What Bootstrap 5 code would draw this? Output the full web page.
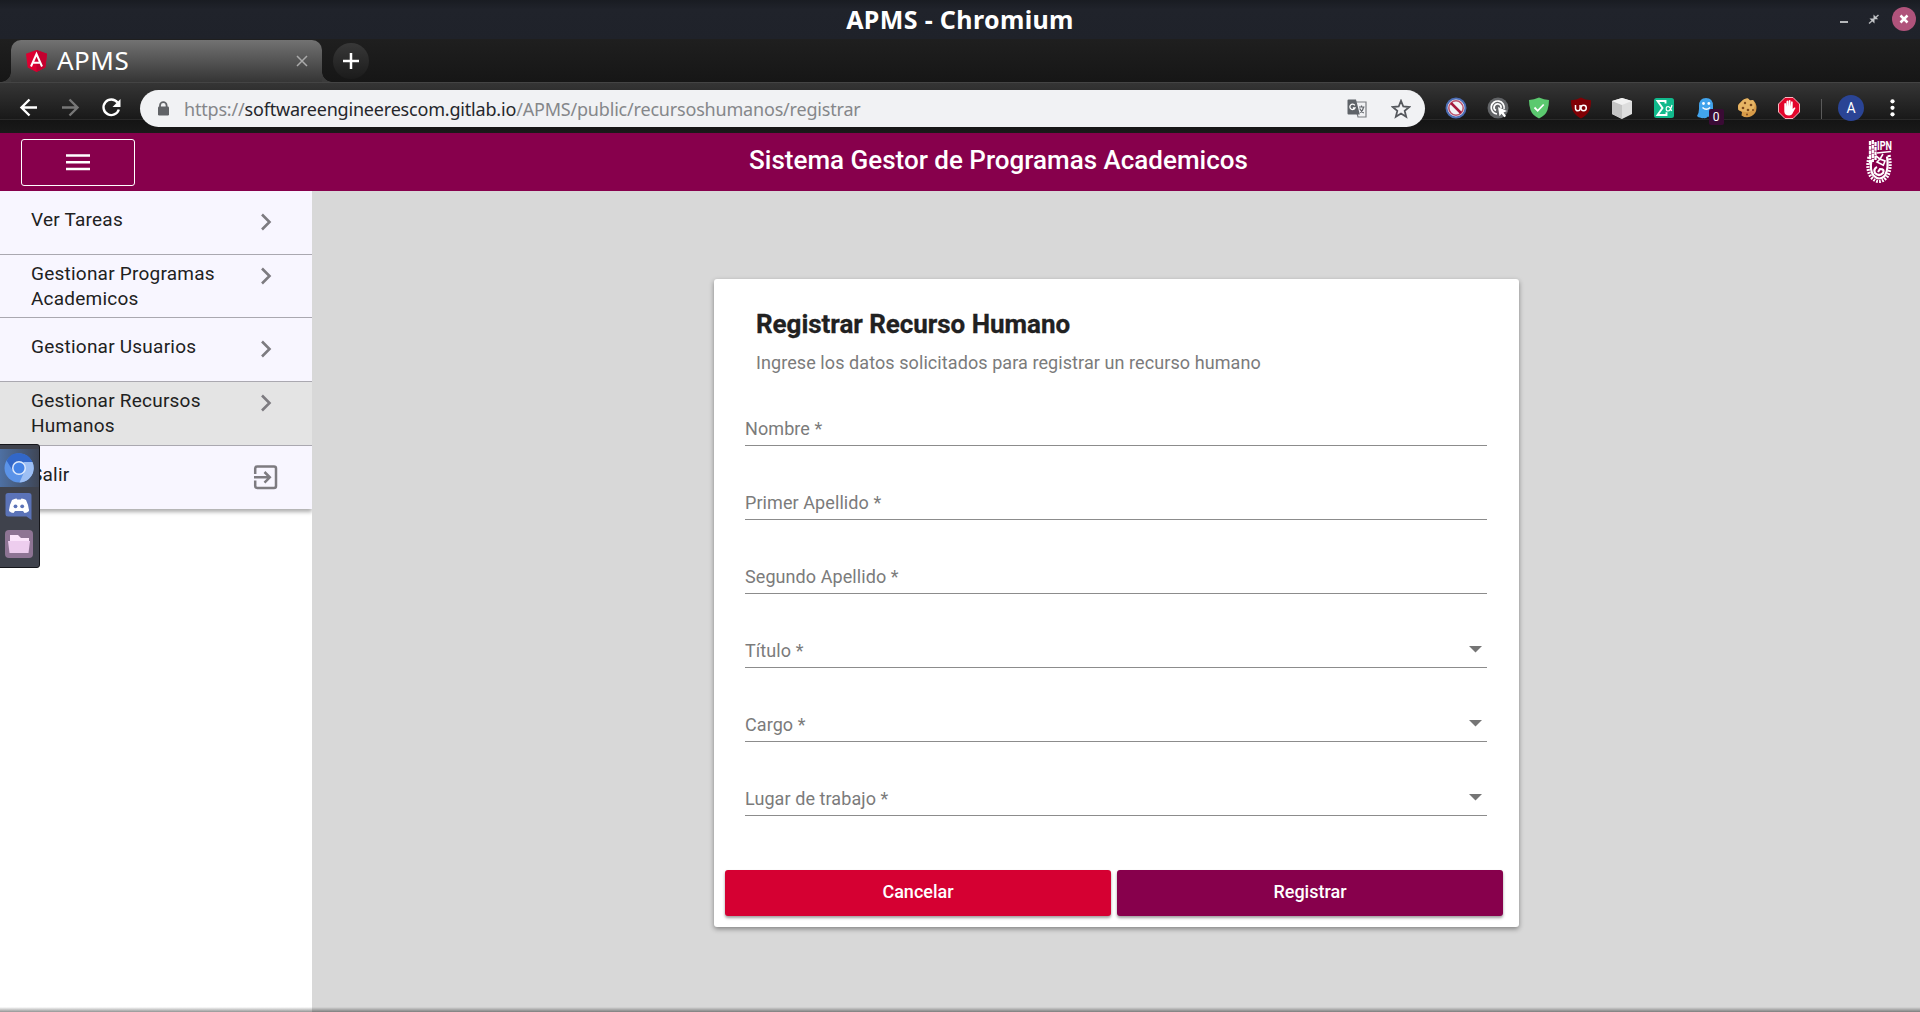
<!DOCTYPE html>
<html lang="es">
<head>
<meta charset="utf-8">
<meta name="viewport" content="width=device-width, initial-scale=1">
<title>APMS</title>
<link href="https://cdn.jsdelivr.net/npm/bootstrap@5.3.0/dist/css/bootstrap.min.css" rel="stylesheet">
<style>
:root{--guinda:#87004c;--rojo:#d50032}
body{font-family:Roboto,"Liberation Sans",sans-serif;background:#d8d8d8;height:1012px;overflow:hidden;color:#212121}
svg{display:block;flex:none}
.ui-font{font-family:"Noto Sans","Open Sans",sans-serif}
.titlebar{height:39px;background:linear-gradient(#191c22,#20232b 25%,#1f222a);color:#fff}
.win-title{font-weight:700;font-size:25px;line-height:38px;height:39px;letter-spacing:.36px}
.win-side{width:96px}
.tabstrip{height:43px;background:linear-gradient(#1f1f1f,#161616);padding-left:11px}
.tab-active{width:311px;height:42px;margin-top:1px;background:linear-gradient(#727272,#353535);border-radius:10px 10px 0 0;padding:0 14px 0 15px;color:#fff}
.tab-active::before,.tab-active::after{content:"";position:absolute;bottom:0;width:10px;height:10px}
.tab-active::before{left:-10px;background:radial-gradient(circle at 0 0,transparent 9.5px,#3b3b3b 10px)}
.tab-active::after{right:-10px;background:radial-gradient(circle at 100% 0,transparent 9.5px,#3b3b3b 10px)}
.tab-name{font-size:26px;line-height:40px;height:42px;margin-left:10px;letter-spacing:.5px}
.new-tab{width:36px;height:36px;margin:4px 0 0 11px;background:linear-gradient(#383838,#1b1b1b)}
.toolbar{height:51px;padding:0 23px 0 17px;background:linear-gradient(#444 0 1px,#353535 1px,#191919 37px,#2a2a2a 37px 38px,#141414 38px,#1a1a1a)}
.omnibox{width:1285px;height:37px;margin:2px 0 0 17px;background:#f1f2f4;padding:0 14px 0 17px}
.url{font-size:18px;line-height:36px;color:#85878a;margin-left:14px;white-space:nowrap;letter-spacing:-.19px}
.url b{font-weight:400;color:#25272b}
.ext{width:1px;gap:19.6px;margin-left:20px}
.count{left:14px;top:12px;width:15px;height:16px;background:#3a0b35;color:#fff;font:12px/16px Roboto,sans-serif;text-align:center;border-radius:2px}
.app-header{height:58px;background:var(--guinda);padding:0 26px 0 21px;color:#fff}
.menu-btn{width:114px;height:47px;border:1px solid #fff;border-radius:3px;padding:0;margin-top:1px;display:flex;align-items:center;justify-content:center}
.app-title{font-size:26px;font-weight:500;line-height:55px;height:58px;margin-right:3px}
.app-main{height:821px}
.sidebar{width:312px;background:#fff;overflow:hidden}
.side-list{border-radius:0;box-shadow:0 3px 4px rgba(0,0,0,.32)}
.side-list .list-group-item{height:63.7px;background:#f8f6ff;border:0;border-bottom:1px solid #aaa8b0;border-radius:0;padding:6px 26px 0 31px;font-size:19px;line-height:25px;color:#212121;letter-spacing:.23px}
.side-list .list-group-item:last-child{border-bottom:0}
.side-list .one-line{padding-top:16px}
.side-list .on{background:#e4e4e4}
.side-label{width:205px}
.reg-card{width:805px;height:648px;margin:88px 0 0 402px;border:0;border-radius:3px;box-shadow:0 2px 5px rgba(0,0,0,.4);padding:0 16px 11px 11px}
.reg-title{font-size:26px;font-weight:700;line-height:32px;margin:29px 0 0 31px;letter-spacing:-.04px;-webkit-text-stroke:.3px #212121}
.reg-sub{font-size:18px;line-height:24px;color:#7b7b7b;margin:11px 0 0 31px;letter-spacing:.08px}
.fields{margin:23px 16px 0 20px}
.field{height:74px;border-bottom:1px solid #8c8c8c;color:#7b7b7b;font-size:18px;line-height:22px;padding-bottom:5px;letter-spacing:.08px}
.field:first-child{height:48px}
.acts{gap:6px}
.acts .btn{height:46px;border:0;border-radius:3px;color:#fff;font-size:18px;font-weight:500;line-height:42px;padding:0 0 2px;box-shadow:0 2px 3px rgba(0,0,0,.38)}
.btn-cancel{background:var(--rojo)}
.btn-reg{background:var(--guinda)}
.dock{left:-2px;top:444px;width:42px;height:124px;background:#3f424c;border:1px solid #15161b;border-radius:0 3px 3px 0}
.dock-cell{height:38px;padding-left:5px}
.dock-cell.live{background:linear-gradient(90deg,#4e71a5,#3f4656);margin-top:4px}
.edge{left:0;bottom:0;width:1920px;height:5px;background:linear-gradient(rgba(0,0,0,0),rgba(0,0,0,.42))}
</style>
</head>
<body>
<header class="ui-font">
  <div class="titlebar d-flex align-items-center justify-content-between">
    <div class="win-side"></div>
    <div class="win-title">APMS - Chromium</div>
    <svg class="win-side" width="96" height="39" viewBox="1824 0 96 39">
      <path d="M1840 22h8" stroke="#b5b7ba" stroke-width="2"/>
      <path d="M1869 23.500l4-3.500m5.500-5l-4 3.500" stroke="#b5b7ba" stroke-width="1.500"/>
      <path d="M1869.500 18.500h5v5zM1873.500 19.200v-4.700l4.700 4.700z" fill="#c4c6c9"/>
      <circle cx="1904" cy="19" r="12" fill="#b0537b"/>
      <path d="M1900.500 15.500l7 7m0-7l-7 7" stroke="#fff" stroke-width="2.500"/>
    </svg>
  </div>
  <div class="tabstrip d-flex align-items-start">
    <div class="tab-active d-flex align-items-center position-relative">
      <svg width="21" height="22" viewBox="0 0 21 22"><path d="M10.500 0L21 3.700 19.300 17.500 10.500 22 1.700 17.500 0 3.700z" fill="#dd0031"/><path d="M10.500 0L21 3.700 19.300 17.500 10.500 22z" fill="#c3002f"/><path d="M5 16.500L10.500 4 16 16.500M7.500 12.800h6" fill="none" stroke="#fff" stroke-width="2"/></svg>
      <span class="tab-name">APMS</span>
      <svg class="ms-auto" width="12" height="12" viewBox="0 0 12 12"><path d="M1 1l10 10m0-10L1 11" stroke="#aaa" stroke-width="1.500"/></svg>
    </div>
    <div class="new-tab rounded-circle d-flex align-items-center justify-content-center"><svg width="16" height="16"><path d="M8 0v16M0 8h16" stroke="#fff" stroke-width="2.500"/></svg></div>
  </div>
  <div class="toolbar d-flex align-items-center">
    <svg width="106" height="24" viewBox="17 95 106 24" fill="none" stroke-width="2.400">
      <path d="M37 106.500H21.500m8-8l-8 8 8 8" stroke="#fff"/>
      <path d="M62 106.500h15.500m-8-8l8 8-8 8" stroke="#777"/>
      <path d="M117.500 101.500a7.800 7.800 0 1 0 1.300 7" stroke="#fff"/><path d="M120.500 98v8h-8z" fill="#fff"/>
    </svg>
    <div class="omnibox rounded-pill d-flex align-items-center">
      <svg width="13" height="16" viewBox="0 0 13 16"><path d="M3 6V4.500a3.300 3.300 0 0 1 6.600 0V6" fill="none" stroke="#616367" stroke-width="1.800"/><rect x="1" y="5.500" width="11" height="9" rx="1.200" fill="#616367"/></svg>
      <div class="url"><span>https://</span><b>softwareengineerescom.gitlab.io</b><span>/APMS/public/recursoshumanos/registrar</span></div>
      <svg class="ms-auto" width="20" height="20" viewBox="0 0 20 20"><path d="M7 3h12v15h-8z" fill="#f1f2f4" stroke="#7a7c80" stroke-width="1.200"/><path d="M1.500.500h7.500l3.800 15H1.500a1 1 0 0 1-1-1V1.500a1 1 0 0 1 1-1z" fill="#5f6368"/><path d="M7.800 6.300A2.700 2.700 0 1 0 8 9H5.800" fill="none" stroke="#fff" stroke-width="1.300"/><path d="M12 8h5.500M14.500 6.500V8m2 0q-.5 4-3.500 5.500m-.300-4q1.500 3 4 4.500" fill="none" stroke="#5f6368" stroke-width="1.200"/></svg>
      <svg class="ms-4" width="20" height="20" viewBox="0 0 20 20"><path d="M10 1.800l2.300 5.700 6 .500-4.600 3.900 1.500 5.900L10 14.600l-5.200 3.200 1.500-5.900L1.700 8l6-.500z" fill="none" stroke="#55585d" stroke-width="1.800"/></svg>
    </div>
    <div class="ext d-flex align-items-center flex-grow-1">
      <svg width="22" height="22" viewBox="0 0 22 22"><circle cx="11" cy="11" r="9.500" fill="#f2f2f5" stroke="#4c6db5" stroke-width="2"/><circle cx="11" cy="11" r="7.200" fill="none" stroke="#b9526d" stroke-width="1.500"/><path d="M6 6l10 10" stroke="#a51a3c" stroke-width="2.500"/></svg>
      <svg width="22" height="22" viewBox="0 0 22 22"><circle cx="11" cy="11" r="10.500" fill="#626467"/><path d="M10 17a6.500 6.500 0 1 1 7-5M9 13.500a3.500 3.500 0 1 1 5-2.500" fill="none" stroke="#fff" stroke-width="1.700"/><path d="M11 10l9 4-3.500 1.500L19 19l-1.700 1.300-2.800-3.500-2 2.500z" fill="#fff"/></svg>
      <svg width="22" height="22" viewBox="0 0 22 22"><path d="M11 .500q5 2.300 10 2.500 0 5.500-1.500 10-2 5.500-8.500 8.500Q4.500 18.500 2.500 13 1 8.500 1 3 6 2.800 11 .500z" fill="#5bc96f"/><path d="M6.500 10.500l3.200 3.300 6-6.300" fill="none" stroke="#fff" stroke-width="1.800"/></svg>
      <svg width="22" height="22" viewBox="0 0 22 22"><path d="M11 .500q4 2.500 10 2.800 0 7-2 11-2.500 4.500-8 7.200-5.500-2.700-8-7.200-2-4-2-11Q7 3 11 .500z" fill="#800005"/><path d="M5.500 8v3.500a2.300 2.300 0 0 0 4.600 0V8" fill="none" stroke="#fff" stroke-width="1.500"/><circle cx="13.600" cy="11" r="2.700" fill="none" stroke="#fff" stroke-width="1.500"/></svg>
      <svg width="22" height="22" viewBox="0 0 22 22"><path d="M11 1l10 3v13l-10 5L1 17V4z" fill="#ddd"/><path d="M1 4l10 4v14L1 17z" fill="#c4c4c4"/><path d="M1 4l10-3 10 3-10 4z" fill="#f1f1f1"/></svg>
      <svg width="22" height="22" viewBox="0 0 22 22"><rect x="1" y="1" width="20" height="20" rx="2.500" fill="#11b98c"/><path d="M12.500 6.500V4H4.500l5 7-5 7h9v-2.700" fill="none" stroke="#fff" stroke-width="1.900"/><path d="M19 8q-1.500 6-4 6-1.800 0-1.800-2.300t2-2.200q2 .300 3.500 4.500" fill="none" stroke="#fff" stroke-width="1.200"/></svg>
      <div class="position-relative">
        <svg width="22" height="22" viewBox="0 0 22 22"><path d="M4 9q0-8 7-8t7 8v7q-.5 4-2.500 4.500-1.500-.5-2.500-1-2 2.500-4.500 1.500-1.500.5-3.500-.5-1.500 0-3-1.500Q4 16 4 12z" fill="#42a4ed"/><circle cx="8.500" cy="6.500" r="1.400" fill="#fff"/><circle cx="13.800" cy="6.500" r="1.400" fill="#fff"/><path d="M7.500 10.500q3.800 3.500 7.500 0" fill="none" stroke="#fff" stroke-width="1.500"/></svg>
        <span class="count position-absolute">0</span>
      </div>
      <svg width="22" height="22" viewBox="0 0 22 22"><path d="M7 3q2-2 5-1.500l2 2 3-.500q3.500 3 3.500 8A9.500 9.500 0 0 1 5.500 18.500L6 15 2.500 13Q1 8 4 6z" fill="#d89b48"/><path d="M7 3q2-2 5-1.500l2 2 3-.500q3 4 1 8t-7 4-8.500-2Q1 8 4 6z" fill="#e7b564"/><g fill="#7d4a1e"><circle cx="9" cy="6" r="1.200"/><circle cx="15" cy="8" r="1.300"/><circle cx="7" cy="11" r="1.300"/><circle cx="12" cy="13" r="1.300"/><circle cx="17" cy="13" r="1"/><circle cx="11" cy="17.500" r="1"/></g></svg>
      <svg width="22" height="22" viewBox="0 0 22 22"><path d="M7 .500h8L21.500 7v8L15 21.500H7L.500 15V7z" fill="#e3052b" stroke="#f7b7bf" stroke-width="1"/><path d="M6.300 12V6.500q.9-1 1.700 0V10l.6-6q.9-1 1.700 0V9.500l.5-6q.9-1 1.700 0v6.200l.6-5q.9-.8 1.600.2V12l1.500-1.500q1.200-.3 1.300.5L15 15.500q-1 3-4 3-4.500 0-4.700-4z" fill="#fff"/></svg>
      <svg class="ms-n1" width="94" height="28" viewBox="1818 93 94 28"><path d="M1820.500 98v20" stroke="#5a5a5a"/><circle cx="1850" cy="107" r="13" fill="#2a4495"/><text x="1850" y="112" fill="#fff" font-family="Roboto" font-size="14" text-anchor="middle">A</text><g fill="#fff"><circle cx="1891.500" cy="100.300" r="2.100"/><circle cx="1891.500" cy="106.800" r="2.100"/><circle cx="1891.500" cy="113.300" r="2.100"/></g></svg>
    </div>
  </div>
</header>

<nav class="app-header d-flex align-items-center justify-content-between">
  <button class="btn menu-btn" type="button" aria-label="Menú"><svg width="24" height="17"><path d="M0 1.500h24M0 8.200h24M0 15h24" stroke="#fff" stroke-width="2.400"/></svg></button>
  <div class="app-title">Sistema Gestor de Programas Academicos</div>
  <svg class="overflow-visible" width="29" height="48" viewBox="1865 138 29 48" fill="none" stroke="#fff">
    <path d="M1870 141v24M1872.800 140v22M1875.500 142v18" stroke-width="2.300" stroke-dasharray="4 .700"/>
    <text x="1877" y="150" font-family="Roboto" font-weight="700" font-size="12" textLength="15" lengthAdjust="spacingAndGlyphs" fill="#fff" stroke="none">IPN</text>
    <path d="M1877 153l14-1.500" stroke-width="1.500"/>
    <path d="M1869 157q-3 12 2 20 8 9 16 0 5-8 2-22" stroke-width="3.200" stroke-dasharray="1.800 1.200"/>
    <path d="M1871.500 160q-2 10 2 15.500 6 6 11.500 0 4-7 2-19" stroke-width="2.200"/>
    <path d="M1876 156l4 3-3 3 6 3m0-11l-3 5 5 2-2 5" stroke-width="1.600"/>
    <path d="M1877 167q-4 2-2 6 4 4 8 0 2-4-3-4l-2 3" stroke-width="2.200"/>
  </svg>
</nav>

<main class="app-main d-flex align-items-stretch">
  <aside class="sidebar">
    <div class="list-group side-list">
      <a class="list-group-item one-line d-flex align-items-start justify-content-between"><span class="side-label">Ver Tareas</span><svg width="50" height="30" viewBox="0 0 50 30"><path d="M26 7.500l7.500 7.500-7.500 7.500" fill="none" stroke="#7d7b80" stroke-width="2.600"/></svg></a>
      <a class="list-group-item d-flex align-items-start justify-content-between"><span class="side-label">Gestionar Programas Academicos</span><svg width="50" height="30" viewBox="0 0 50 30"><path d="M26 7.500l7.500 7.500-7.500 7.500" fill="none" stroke="#7d7b80" stroke-width="2.600"/></svg></a>
      <a class="list-group-item one-line d-flex align-items-start justify-content-between"><span class="side-label">Gestionar Usuarios</span><svg width="50" height="30" viewBox="0 0 50 30"><path d="M26 7.500l7.500 7.500-7.500 7.500" fill="none" stroke="#7d7b80" stroke-width="2.600"/></svg></a>
      <a class="list-group-item on d-flex align-items-start justify-content-between"><span class="side-label">Gestionar Recursos Humanos</span><svg width="50" height="30" viewBox="0 0 50 30"><path d="M26 7.500l7.500 7.500-7.500 7.500" fill="none" stroke="#7d7b80" stroke-width="2.600"/></svg></a>
      <a class="list-group-item one-line d-flex align-items-start justify-content-between"><span class="side-label">Salir</span><svg width="50" height="30" viewBox="0 0 50 30"><path d="M19.200 12V6.500a2 2 0 0 1 2-2H38a2 2 0 0 1 2 2V24a2 2 0 0 1-2 2H21.200a2 2 0 0 1-2-2v-5.500M18 15.300h15M28.500 10l5.300 5.300-5.300 5.300" fill="none" stroke="#7d7b80" stroke-width="2.500"/></svg></a>
    </div>
  </aside>
  <section>
    <form class="card reg-card">
      <h1 class="reg-title">Registrar Recurso Humano</h1>
      <p class="reg-sub">Ingrese los datos solicitados para registrar un recurso humano</p>
      <div class="fields">
        <div class="field d-flex align-items-end">Nombre *</div>
        <div class="field d-flex align-items-end">Primer Apellido *</div>
        <div class="field d-flex align-items-end">Segundo Apellido *</div>
        <div class="field d-flex align-items-end justify-content-between">Título *<svg width="18" height="22"><path d="M0 6h13L6.500 12.500z" fill="#757575"/></svg></div>
        <div class="field d-flex align-items-end justify-content-between">Cargo *<svg width="18" height="22"><path d="M0 6h13L6.500 12.500z" fill="#757575"/></svg></div>
        <div class="field d-flex align-items-end justify-content-between">Lugar de trabajo *<svg width="18" height="22"><path d="M0 6h13L6.500 12.500z" fill="#757575"/></svg></div>
      </div>
      <div class="acts d-flex mt-auto">
        <button type="button" class="btn btn-cancel flex-fill w-50">Cancelar</button>
        <button type="button" class="btn btn-reg flex-fill w-50">Registrar</button>
      </div>
    </form>
  </section>
</main>

<div class="dock position-absolute">
  <div class="dock-cell live d-flex align-items-center"><svg width="30" height="30" viewBox="0 0 30 30"><circle cx="15" cy="15" r="14.500" fill="#5b93e8"/><path d="M2.500 7.500a14.500 14.500 0 0 1 26 1.500H15L9 18z" fill="#3267c8"/><path d="M28.500 9a14.500 14.500 0 0 1-13 20.500L21 17l-1-8z" fill="#9dbff4"/><circle cx="15" cy="15" r="7" fill="#dfeafc"/><circle cx="15" cy="15" r="5.500" fill="#4483e6"/></svg></div>
  <div class="dock-cell d-flex align-items-center"><svg width="30" height="28" viewBox="0 0 30 28"><path d="M4 1h21a2.500 2.500 0 0 1 2.500 2.500V28l-5-3.500H4A2.500 2.500 0 0 1 1.500 22V3.500A2.500 2.500 0 0 1 4 1z" fill="#5b73b8"/><path d="M8 8q3-1.700 4.500-1.500l.7 1h3.600l.7-1Q20 6.500 22 8q3 6 3 11-2 2-4.500 2l-1.500-2h-8L9.500 21Q7 21 5 19q0-5 3-11z" fill="#fff"/><circle cx="11.500" cy="14.300" r="1.900" fill="#5b73b8"/><circle cx="18.200" cy="14.300" r="1.900" fill="#5b73b8"/></svg></div>
  <div class="dock-cell d-flex align-items-center"><svg width="30" height="30" viewBox="0 0 30 30"><rect x="1" y="1" width="28" height="28" rx="4" fill="#8e7494"/><path d="M6 6h8l3 3h8v5H6z" fill="#fbe4fb"/><path d="M4 12h22l-1.500 12h-19z" fill="#edcdee"/></svg></div>
</div>
<div class="edge position-absolute"></div>
<script src="https://cdn.jsdelivr.net/npm/bootstrap@5.3.0/dist/js/bootstrap.bundle.min.js"></script>
</body>
</html>
